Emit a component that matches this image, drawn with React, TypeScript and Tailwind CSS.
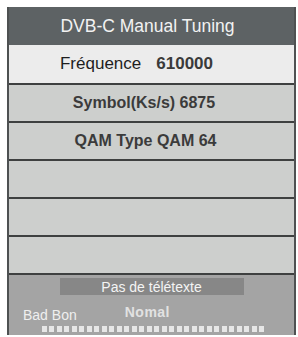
const ROWS = ['Symbol(Ks/s) 6875', 'QAM Type QAM 64', '', '', ''];
const PAD = ['pr-[15px]', 'pr-[12px]', '', '', ''];

function SignalBar() {
  // 15 pairs of little squares, like the OSD strength meter
  return (
    <div className="ml-[33px] mt-[3px] flex gap-[3px]">
      {Array.from({ length: 15 }).map((_, i) => (
        <div key={i} className="flex gap-[2px]">
          <div className="h-[6px] w-[5px] bg-[#e6e6e6]" />
          <div className="h-[6px] w-[5px] bg-[#e6e6e6]" />
        </div>
      ))}
    </div>
  );
}

export default function App() {
  return (
    <div className="h-[337px] w-[298px] bg-white pl-[7px] pt-[7px] font-['Liberation_Sans',Arial,sans-serif]">
      <div className="flex w-[289px] flex-col border-x-2 border-[#4e5152] bg-[#cdcfcd]">
        <div className="flex h-[38px] items-center justify-center bg-[#5d6264] pr-2 text-[17.5px] text-[#f2f2f2]">
          DVB-C Manual Tuning
        </div>
        <div className="flex h-[38px] items-center justify-center bg-[#ececec] pr-[30px] text-[17px] text-[#1e1e1e]">
          <span>Fréquence</span>
          <span className="ml-[15px] font-bold text-[#3a3a3a]">610000</span>
        </div>
        {ROWS.map((label, i) => (
          <div
            key={i}
            className={`flex h-[38px] items-center justify-center border-t-2 border-[#3e4040] text-[16px] font-bold text-[#3b3b3b] ${PAD[i]}`}
          >
            {label}
          </div>
        ))}
        <div className="flex h-[62px] flex-col border-t-2 border-[#3e4040] bg-[#a4a4a4] pt-[3px]">
          <div className="mx-auto flex h-[17px] w-[184px] items-center justify-center bg-[#878787] text-[14px] leading-none text-[#f4f4f4]">
            Pas de télétexte
          </div>
          <div className="mt-[9px] flex items-end">
            <span className="pl-[14px] text-[14px] leading-[16px] text-[#efefef]">Bad Bon</span>
            <span className="mb-[3px] ml-[48px] text-[14px] font-bold leading-[16px] tracking-[0.5px] text-[#e2e2e2]">
              Nomal
            </span>
          </div>
          <SignalBar />
        </div>
      </div>
    </div>
  );
}
